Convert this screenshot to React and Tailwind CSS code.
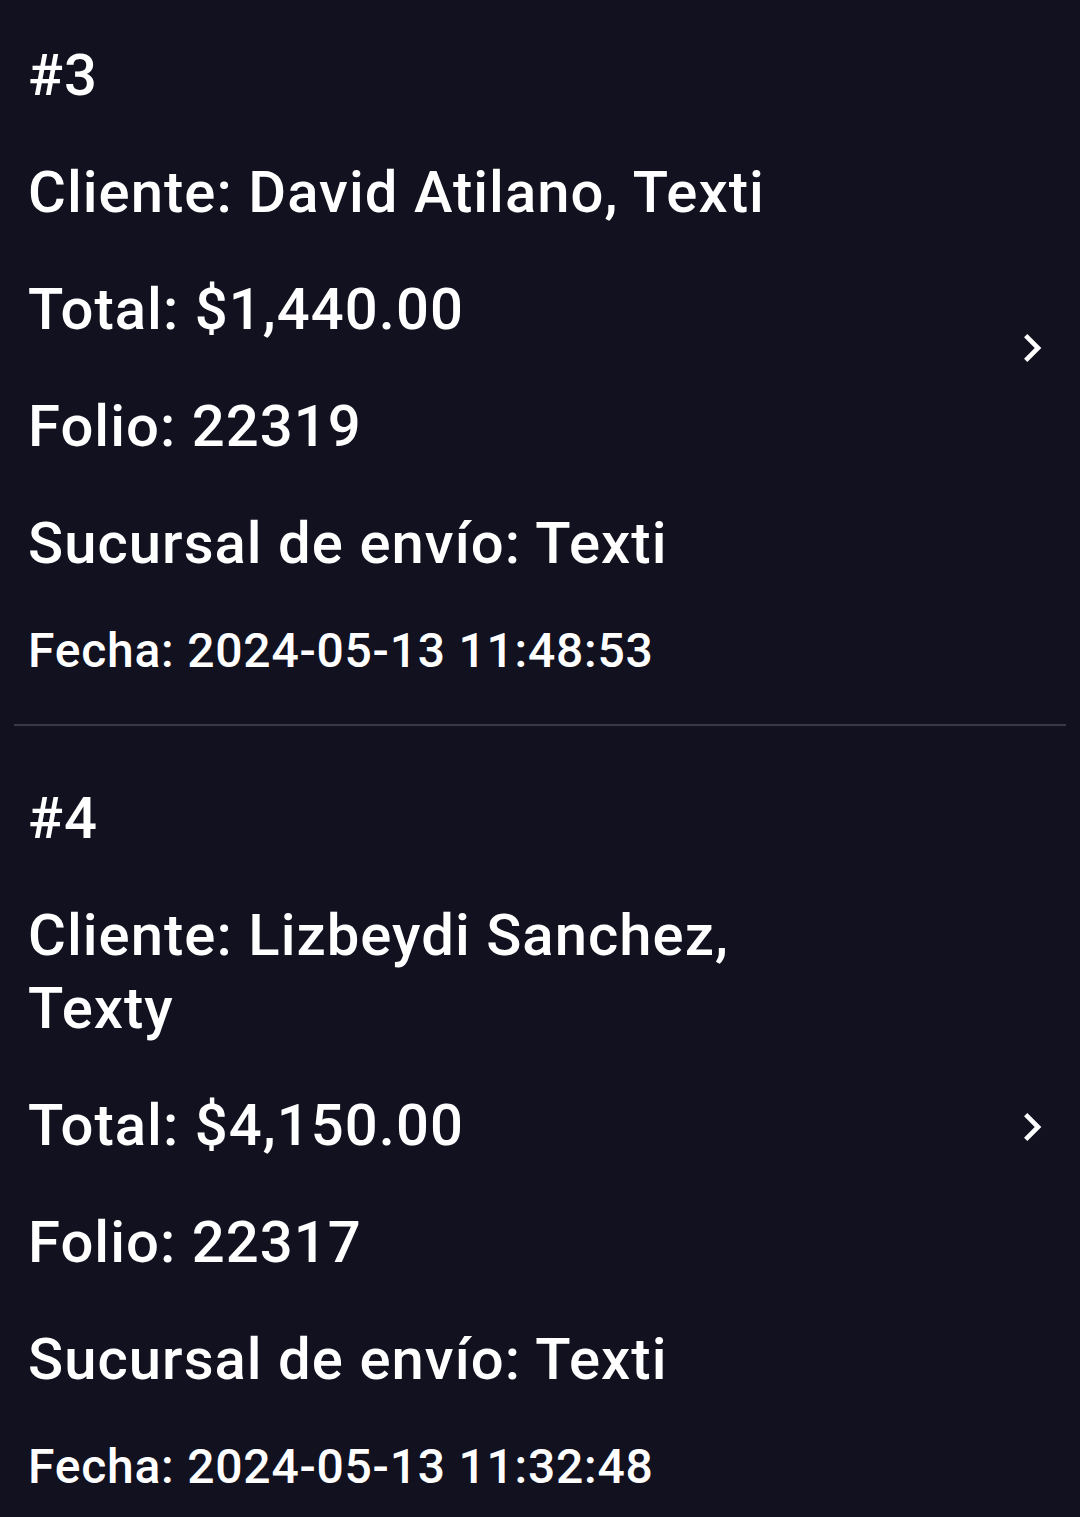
const orders = [
  {
    n: 3,
    cliente: 'David Atilano, Texti',
    total: '$1,440.00',
    folio: '22319',
    sucursal: 'Texti',
    fecha: '2024-05-13 11:48:53',
  },
  {
    n: 4,
    cliente: 'Lizbeydi Sanchez, Texty',
    total: '$4,150.00',
    folio: '22317',
    sucursal: 'Texti',
    fecha: '2024-05-13 11:32:48',
  },
];

const Chevron = () => (
  <svg width="56" height="56" viewBox="0 0 24 24" fill="currentColor">
    <path d="M10 6L8.59 7.41 13.17 12l-4.58 4.59L10 18l6-6z" />
  </svg>
);

const OrderRow = ({ order, first }) => (
  <div className={`flex items-center pl-[28px] pr-[20px] pb-[42px] ${first ? 'pt-[39px]' : 'pt-[56px]'}`}>
    <div className="flex-1 flex flex-col">
      <div className="max-w-[800px] flex flex-col gap-[44px] text-[58px] leading-[73px] font-medium tracking-[0.018em]">
        <div>#{order.n}</div>
        <div>Cliente: {order.cliente}</div>
        <div>Total: {order.total}</div>
        <div>Folio: {order.folio}</div>
        <div>Sucursal de envío: {order.sucursal}</div>
      </div>
      <div className="mt-[40px] text-[48px] leading-[62px] font-medium tracking-[0.016em]">
        Fecha: {order.fecha}
      </div>
    </div>
    <div className="mb-[26px] text-white">
      <Chevron />
    </div>
  </div>
);

export default function App() {
  return (
    <div className="min-h-screen bg-[#11111f] text-white font-['Roboto',sans-serif] overflow-hidden">
      {orders.map((o, i) => (
        <div key={o.n}>
          {i > 0 && <div className="mx-[14px] h-[2px] bg-[#3a3a47]" />}
          <OrderRow order={o} first={i === 0} />
        </div>
      ))}
    </div>
  );
}
